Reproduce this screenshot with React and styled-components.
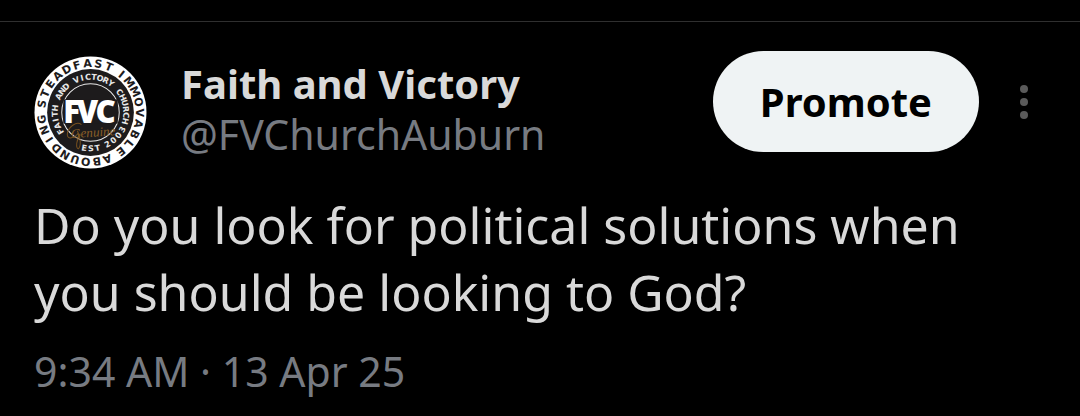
import styled, { createGlobalStyle } from "styled-components";

const GlobalStyle = createGlobalStyle`
  * {
    box-sizing: border-box;
  }
  body {
    margin: 0;
    background-color: #000;
    color: #d9d9d9;
    font-family: "Noto Sans", "Open Sans", sans-serif;
  }
`;

// spreads the letters evenly from one angle to another, 0 is at the top
const ArcText = ({ text, radius, from, to, inward, size }) => {
  const letters = text.split("");
  const step = (to - from) / (letters.length - 1);

  return letters.map((letter, index) => (
    <text
      key={index}
      x="56"
      y={inward ? 56 + radius : 56 - radius}
      fontSize={size}
      transform={`rotate(${from + step * index} 56 56)`}
    >
      {letter}
    </text>
  ));
};

const Logo = () => (
  <LogoSvg viewBox="0 0 112 112" role="img" aria-label="Faith and Victory">
    <circle cx="56" cy="56" r="55.5" fill="#fff" />
    <circle cx="56" cy="56" r="43" fill="#1d1b1c" />
    <circle cx="56" cy="56" r="28.5" fill="none" stroke="#e8e8e8" />
    <g fill="#1d1b1c">
      <ArcText text="STEADFAST" radius={45} from={-80} to={22} size={11} />
      <ArcText text="IMMOVABLE" radius={45} from={39} to={142} size={11} />
      <ArcText text="ABOUNDING" radius={45} from={160} to={262} size={11} />
    </g>
    <g fill="#e8e8e8">
      <ArcText
        text="FAITH AND VICTORY CHURCH"
        radius={32.5}
        from={-122}
        to={104}
        size={8}
      />
      <ArcText text="EST" radius={38.5} from={10} to={-11} size={8} inward />
      <ArcText text="2003" radius={38.5} from={-28} to={-62} size={8} inward />
    </g>
    <rect x="29" y="43" width="54" height="24" fill="#1d1b1c" />
    <g className="initials">
      <text x="29" y="66">
        F
      </text>
      <text x="42" y="66">
        V
      </text>
      <text x="61" y="66">
        C
      </text>
    </g>
    <text className="script" x="59" y="80" transform="rotate(-4 59 80)">
      Genuine
    </text>
    <path
      d="M47 68c-5-4-14 3-14 10 0 5 7 4 11-2M43 74c3 6 4 15 1 18-3 0-2-10 2-14"
      fill="none"
      stroke="#76501f"
    />
  </LogoSvg>
);

const App = () => {
  return (
    <>
      <GlobalStyle />
      <Post>
        <Header>
          <Logo />
          <Author>
            <Name>Faith and Victory</Name>
            <Handle href="#">@FVChurchAuburn</Handle>
          </Author>
          <PromoteButton type="button">Promote</PromoteButton>
          <MenuButton type="button" aria-label="More">
            <svg width="8" height="34" viewBox="0 0 8 34">
              <circle cx="4" cy="4" r="4" />
              <circle cx="4" cy="17" r="4" />
              <circle cx="4" cy="30" r="4" />
            </svg>
          </MenuButton>
        </Header>
        <Message>
          Do you look for political solutions when you should be looking to God?
        </Message>
        <Time>9:34 AM · 13 Apr 25</Time>
      </Post>
    </>
  );
};

export default App;

const Post = styled.article`
  margin-top: 21px;
  padding: 29px 34px 16px;
  border-top: 1px solid #2f2f2f;
`;

const Header = styled.header`
  display: flex;
  align-items: flex-start;
`;

const LogoSvg = styled.svg`
  flex: none;
  width: 113px;
  height: 113px;
  margin-top: 5px;
  font-family: "DejaVu Sans", sans-serif;
  font-weight: 700;
  text-anchor: middle;
  .initials {
    fill: #fff;
    font-family: "Open Sans", sans-serif;
    font-size: 31px;
    font-weight: 800;
    text-anchor: start;
  }
  .script {
    fill: #8a5f28;
    font-family: "Liberation Serif", serif;
    font-size: 13px;
    font-style: italic;
    font-weight: 400;
  }
`;

const Author = styled.div`
  display: flex;
  flex: 1;
  flex-direction: column;
  min-width: 0;
  padding: 8px 0 0 34px;
  line-height: 50px;
  white-space: nowrap;
`;

const Name = styled.strong`
  font-size: 40px;
  font-weight: 700;
`;

const Handle = styled.a`
  color: #777b82;
  font-size: 41px;
  text-decoration: none;
`;

const PromoteButton = styled.button`
  height: 101px;
  padding: 0 47px;
  border: 0;
  border-radius: 51px;
  background-color: #eff3f4;
  color: #000;
  font-family: inherit;
  font-size: 40px;
  font-weight: 700;
`;

const MenuButton = styled.button`
  display: flex;
  align-items: center;
  justify-content: center;
  width: 28px;
  height: 101px;
  margin: 0 8px 0 31px;
  padding: 0;
  border: 0;
  background: none;
  fill: #5a5a5a;
`;

const Message = styled.p`
  margin: 23px 0 0;
  font-size: 50px;
  line-height: 67px;
`;

const Time = styled.time`
  display: block;
  margin-top: 20px;
  color: #777b82;
  font-size: 41px;
  line-height: 50px;
`;
